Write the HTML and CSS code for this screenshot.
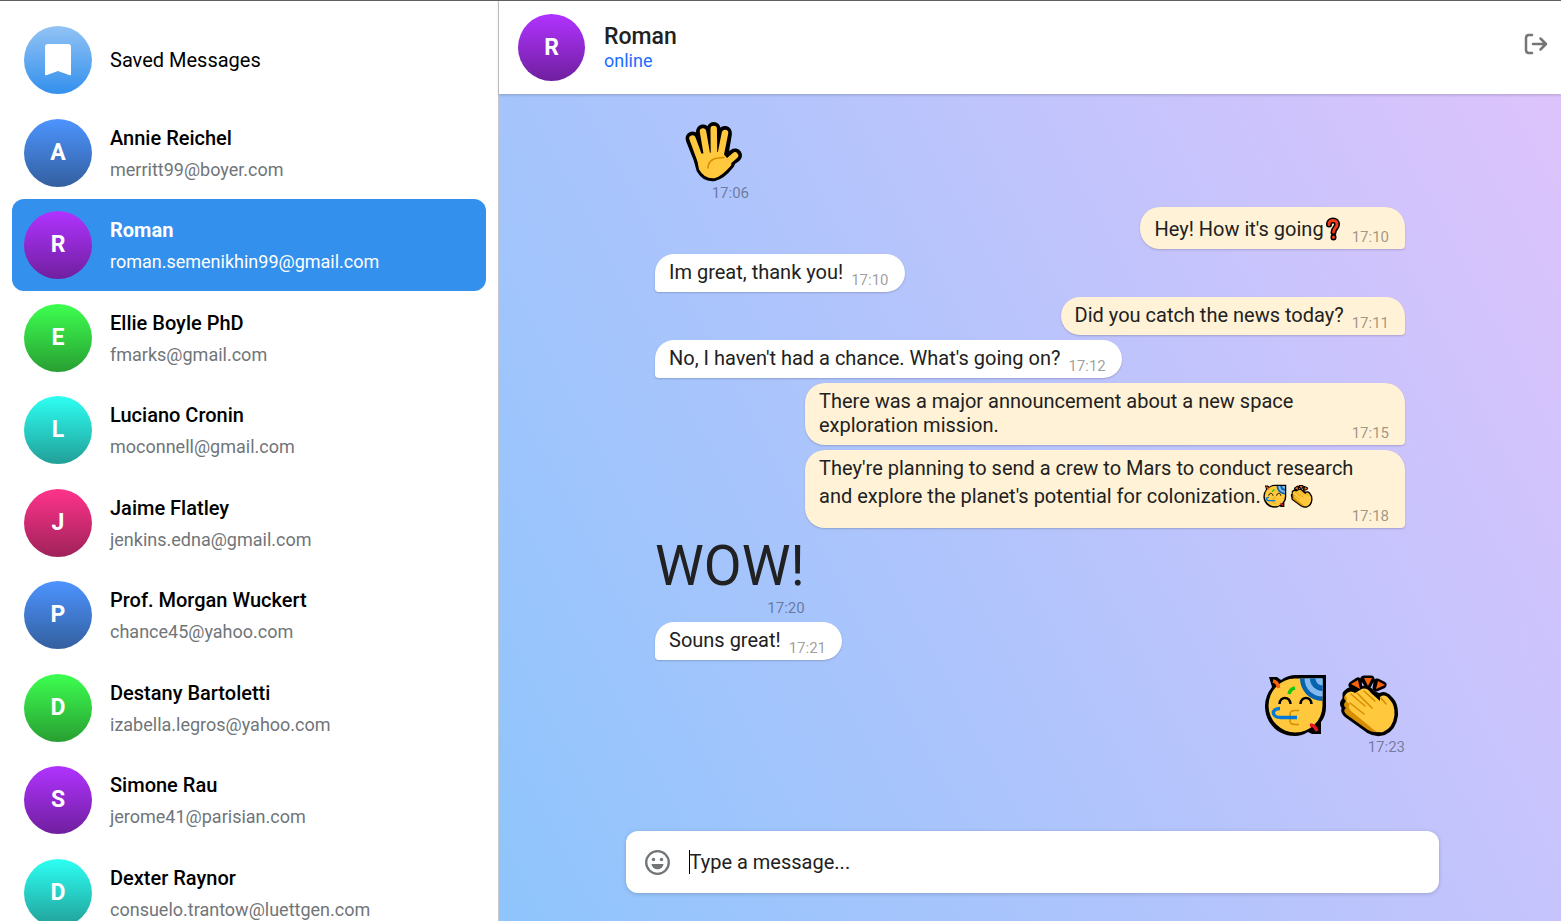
FILE: index.html
```html
<!DOCTYPE html>
<html lang="en">
<head>
<meta charset="utf-8">
<title>Chat</title>
<link rel="stylesheet" href="styles.css">
</head>
<body>
<svg class="sprites" aria-hidden="true">
  <symbol id="hand" viewBox="0 0 64 64">
    <g fill="none" stroke="#000" stroke-width="14" stroke-linecap="round" stroke-linejoin="round">
      <path d="M10.500 19.500L17 36M21 12.500L24 30M31.700 10L32 30M43 14L40 32M53 36.500L42 44"/>
      <path d="M18 38L21 49Q25 56 32 55Q38 54 46 44L38 36Z" fill="#000"/>
    </g>
    <g fill="none" stroke="#ffc83d" stroke-width="6.500" stroke-linecap="round" stroke-linejoin="round">
      <path d="M10.500 19.500L18 40M21 12.500L25 36M31.700 10L32 36M43 14L38 39M53 36.500L42 46"/>
      <path d="M18 38L20 49Q24 56.500 32 56Q38 54 46 45L38 36Z" fill="#ffc83d"/>
    </g>
    <path d="M26 49C26 41 34 38.500 42 38.500" fill="none" stroke="#d68d00" stroke-width="1.500" stroke-linecap="round"/>
  </symbol>
  <symbol id="party" viewBox="0 0 64 64">
    <path d="M5 4H13L17 7Q24 2 32 2H62V34Q62 43 57 49V61H48L44 59Q38 63 31 63C14 63 1 50 1 33Q1 23 8 14Z" fill="#000"/>
    <path d="M31 5.500H58.500V33A27 27 0 1 1 31 5.500Z" fill="#ffc83d"/>
    <path d="M36 5.500H58.500V28A22.500 22.500 0 0 1 36 5.500Z" fill="#0563af"/>
    <path d="M40.500 5.500H58.500V23.500A18 18 0 0 1 40.500 5.500Z" fill="#83b9ee"/>
    <path d="M46 5.500H58.500V18A12.500 12.500 0 0 1 46 5.500Z" fill="#0563af"/>
    <path d="M51.500 5.500H58.500V12.500A7 7 0 0 1 51.500 5.500Z" fill="#83b9ee"/>
    <g fill="none" stroke-width="3.500">
      <path d="M9 8Q14 9 14.500 15" stroke="#f7630c"/>
      <path d="M25 21Q26 16 31 15" stroke="#16c60c"/>
      <path d="M46 52Q51 52 53 58" stroke="#e81224"/>
      <path d="M15.500 31C16 23 26 23 26.500 31M36.500 31C37 23 47 23 47.500 31" stroke="#000" stroke-width="2.500"/>
      <path d="M35 37.500H31Q26 37.500 26 41.500Q26 44.500 29 44.500Q26 44.500 26 48Q26 51.500 31 51.500H35" stroke="#d68d00" stroke-width="1.500"/>
      <path d="M33 44.500H17C7 44.500 7 35.500 16 35.500" stroke="#0078d7"/>
    </g>
  </symbol>
  <symbol id="clap" viewBox="0 0 64 64">
    <g fill="#000" stroke="#000" stroke-width="7" stroke-linejoin="round">
      <path d="M8 21Q13 15 19 20L22 18Q28 13 34 21L42 24Q47 20 52 27Q57 32 56.500 42Q55 55 45 59Q38 61 31 57L10 42Q5 38 8 34Q3 31 8 27Z"/>
      <path d="M14 12L20 8L21 15ZM26 6H33L30 12ZM39 9L45 12L38 15Z"/>
    </g>
    <path d="M8 21Q4 25 8 28Q4 32 8 35Q4 38 9 42L30 57Q35 60 42 59Z" fill="#d68d00"/>
    <path d="M9 20Q13 17 17 20L22 17Q28 13 33 20L42 28L42 24Q47 20 52 27Q57 32 56.500 42Q55 55 45 59Q40 60 36 57L13 38Q9 34 12 31Q7 29 9 25Q6 23 9 20Z" fill="#ffc83d"/>
    <path d="M13 21L27 33M19 20L34 35M26 18L37 28M12 30L26 41M43 25L48 31" fill="none" stroke="#d68d00" stroke-width="1.500" stroke-linecap="round"/>
    <path d="M13 11L20 7L22 16ZM26 5H34L30 13ZM40 8L47 12L38 16Z" fill="#f7630c"/>
  </symbol>
  <symbol id="question" viewBox="0 0 14 24">
    <path d="M3 7.500C2.500 2 11.500 2 11 7.500C11 11 7.500 11 7.500 15.500M7.500 20V20.500" fill="none" stroke="#000" stroke-width="6" stroke-linecap="round"/>
    <path d="M3 7.500C2.500 2 11.500 2 11 7.500C11 11 7.500 11 7.500 15M7.500 20V20.500" fill="none" stroke="#f03a17" stroke-width="3" stroke-linecap="round"/>
  </symbol>
</svg>

<div class="app">
  <nav class="sidebar" aria-label="Chats">
    <a class="contact" href="#saved">
      <span class="avatar sky"><svg width="26" height="32" viewBox="0 0 26 32" aria-hidden="true"><path d="M3 0H23Q26 0 26 3V30Q26 32 24 31L13 27L2 31Q0 32 0 30V3Q0 0 3 0Z" fill="#fff"/></svg></span>
      <span class="who"><span class="saved">Saved Messages</span></span>
    </a>
    <a class="contact" href="#annie"><span class="avatar blue">A</span><span class="who"><span class="name">Annie Reichel</span><span class="mail">merritt99@boyer.com</span></span></a>
    <a class="contact active" href="#roman"><span class="avatar violet">R</span><span class="who"><span class="name">Roman</span><span class="mail">roman.semenikhin99@gmail.com</span></span></a>
    <a class="contact" href="#ellie"><span class="avatar green">E</span><span class="who"><span class="name">Ellie Boyle PhD</span><span class="mail">fmarks@gmail.com</span></span></a>
    <a class="contact" href="#luciano"><span class="avatar cyan">L</span><span class="who"><span class="name">Luciano Cronin</span><span class="mail">moconnell@gmail.com</span></span></a>
    <a class="contact" href="#jaime"><span class="avatar pink">J</span><span class="who"><span class="name">Jaime Flatley</span><span class="mail">jenkins.edna@gmail.com</span></span></a>
    <a class="contact" href="#morgan"><span class="avatar blue">P</span><span class="who"><span class="name">Prof. Morgan Wuckert</span><span class="mail">chance45@yahoo.com</span></span></a>
    <a class="contact" href="#destany"><span class="avatar green">D</span><span class="who"><span class="name">Destany Bartoletti</span><span class="mail">izabella.legros@yahoo.com</span></span></a>
    <a class="contact" href="#simone"><span class="avatar violet">S</span><span class="who"><span class="name">Simone Rau</span><span class="mail">jerome41@parisian.com</span></span></a>
    <a class="contact" href="#dexter"><span class="avatar cyan">D</span><span class="who"><span class="name">Dexter Raynor</span><span class="mail">consuelo.trantow@luettgen.com</span></span></a>
  </nav>

  <main class="chat">
    <header class="bar">
      <span class="avatar violet">R</span>
      <div class="peer"><h1>Roman</h1><span class="status">online</span></div>
      <button class="icon-button" type="button" aria-label="Log out">
        <svg width="24" height="22" viewBox="0 0 24 22" fill="none" stroke="#757575" stroke-width="2.500" stroke-linecap="round" stroke-linejoin="round" aria-hidden="true"><path d="M8 2H5Q2 2 2 5V17Q2 20 5 20H8M9 11H22M16.500 5.500L22 11L16.500 16.500"/></svg>
      </button>
    </header>

    <section class="messages" aria-label="Messages">
      <div class="jumbo"><div class="big-emoji"><svg role="img" aria-label="Raised hand"><use href="#hand"/></svg></div><time>17:06</time></div>
      <div class="bubble mine"><p>Hey! How it's going<svg class="emoji narrow" role="img" aria-label="Question"><use href="#question"/></svg></p><time>17:10</time></div>
      <div class="bubble"><p>Im great, thank you!</p><time>17:10</time></div>
      <div class="bubble mine"><p>Did you catch the news today?</p><time>17:11</time></div>
      <div class="bubble"><p>No, I haven't had a chance. What's going on?</p><time>17:12</time></div>
      <div class="bubble mine"><p>There was a major announcement about a new space exploration mission.</p><time>17:15</time></div>
      <div class="bubble mine stacked"><p>They're planning to send a crew to Mars to conduct research and explore the planet's potential for colonization.<svg class="emoji" role="img" aria-label="Party face"><use href="#party"/></svg><svg class="emoji" role="img" aria-label="Clapping hands"><use href="#clap"/></svg></p><time>17:18</time></div>
      <div class="jumbo"><p>WOW!</p><time>17:20</time></div>
      <div class="bubble"><p>Souns great!</p><time>17:21</time></div>
      <div class="jumbo mine"><div class="big-emoji"><svg role="img" aria-label="Party face"><use href="#party"/></svg><svg role="img" aria-label="Clapping hands"><use href="#clap"/></svg></div><time>17:23</time></div>
    </section>

    <form class="composer">
      <button class="icon-button" type="button" aria-label="Emoji">
        <svg width="25" height="25" viewBox="0 0 25 25" aria-hidden="true"><circle cx="12.500" cy="12.500" r="11.300" fill="none" stroke="#707579" stroke-width="2.300"/><circle cx="8.500" cy="9.500" r="1.700" fill="#707579"/><circle cx="16.500" cy="9.500" r="1.700" fill="#707579"/><path d="M6.500 14H18.500C17.500 21 7.500 21 6.500 14Z" fill="#707579"/></svg>
      </button>
      <input type="text" aria-label="Message" placeholder="Type a message...">
    </form>
  </main>
</div>
</body>
</html>
```
FILE: styles.css
```css
* { box-sizing: border-box; }

body {
  margin: 0;
  font-family: Roboto, sans-serif;
  font-size: 20px;
  line-height: 24px;
  color: #212121;
}

h1, p { margin: 0; }
button { font: inherit; border: 0; background: none; padding: 0; cursor: pointer; }
svg { display: block; }
.sprites { position: absolute; width: 0; height: 0; }

.app {
  display: grid;
  grid-template-columns: minmax(320px, 499px) 1fr;
  height: 100vh;
  border-top: 1px solid #5f5e63;
  overflow: hidden;
}

/* Contact list */
.sidebar {
  display: grid;
  grid-auto-rows: 92px 93px;
  align-content: start;
  padding: 13px 12px 0;
  border-right: 1px solid #c8c8cc;
  overflow: hidden;
}
.contact {
  display: flex;
  align-items: center;
  gap: 18px;
  padding: 0 12px;
  border-radius: 12px;
  color: #000;
  text-decoration: none;
}
.contact.active { background: #3390ec; color: #fff; }
.who { display: flex; flex-direction: column; gap: 8px; }
.name { padding-top: 2px; font-weight: 500; }
.mail { font-size: 18px; color: #707579; }
.active .name { font-weight: 700; }
.active .mail { color: #fff; }

.avatar {
  display: flex;
  flex: none;
  align-items: center;
  justify-content: center;
  width: 68px;
  height: 68px;
  border-radius: 50%;
  color: #fff;
  font-size: 23px;
  font-weight: 700;
}
.sky { background: linear-gradient(#92c3f5, #3390ec); }
.blue { background: linear-gradient(#4d94ff, #335f9f); }
.violet { background: linear-gradient(#b033ff, #701f9f); }
.green { background: linear-gradient(#3dff50, #289f32); }
.cyan { background: linear-gradient(#2dfff3, #219f98); }
.pink { background: linear-gradient(#ff338b, #9f2259); }

/* Conversation */
.chat {
  display: flex;
  flex-direction: column;
  min-width: 0;
  background: linear-gradient(62deg, #8ec5fc, #e0c3fc);
}
.bar {
  display: flex;
  align-items: center;
  gap: 19px;
  height: 93px;
  padding: 0 13px 0 19px;
  background: #fff;
  box-shadow: 0 1px 3px rgba(0, 0, 0, .2);
}
.bar .avatar { width: 67px; height: 67px; }
.peer { flex: 1; }
.peer h1 { font-size: 23px; font-weight: 500; line-height: 26px; }
.status { display: block; font-size: 18px; line-height: 22px; color: #1a6dff; }
.bar .icon-button { padding-bottom: 8px; }

.messages {
  display: flex;
  flex: 1;
  flex-direction: column;
  align-items: flex-start;
  gap: 5px;
  width: 100%;
  max-width: 750px;
  margin: 0 auto;
  padding-top: 17px;
}
.bubble {
  display: flex;
  align-items: flex-end;
  gap: 8px;
  max-width: 80%;
  padding: 6px 16px 4px 14px;
  border-radius: 20px 20px 20px 4px;
  background: #fff;
  box-shadow: 0 1px 2px rgba(0, 0, 0, .18);
}
.bubble p { flex: 1; padding-bottom: 4px; }
.mine { align-self: flex-end; }
.bubble.mine { border-radius: 20px 20px 4px 20px; background: #fff2d6; }
.stacked { flex-direction: column; gap: 0; }
.bubble.stacked p { padding-bottom: 0; }
time { font-size: 15px; line-height: 16px; color: rgba(0, 0, 0, .4); }

.emoji {
  display: inline-block;
  width: 24px;
  height: 24px;
  margin: 4px 1px 0 2px;
  vertical-align: -5px;
}
.narrow { width: 14px; margin-right: 4px; }

.jumbo { display: flex; flex-direction: column; }
.jumbo p { font-size: 55px; line-height: 66px; }
.jumbo time { align-self: flex-end; line-height: 18px; }
.big-emoji { display: flex; gap: 10px; height: 73px; padding: 8px 3px 0 27px; }
.big-emoji svg { width: 64px; height: 64px; }

/* Message input */
.composer {
  display: flex;
  align-items: center;
  gap: 19px;
  align-self: center;
  width: calc(100% - 40px);
  max-width: 813px;
  height: 62px;
  margin: 0 0 28px 4px;
  padding: 0 19px;
  border-radius: 12px;
  background: #fff;
  box-shadow: 0 1px 4px rgba(0, 0, 0, .18);
}
.composer input {
  flex: 1;
  min-width: 0;
  height: 24px;
  padding: 0;
  border: 0;
  border-left: 1px solid #000;
  outline: 0;
  background: none;
  color: #212121;
  font: inherit;
}
.composer input::placeholder { color: #212121; opacity: 1; }
```
